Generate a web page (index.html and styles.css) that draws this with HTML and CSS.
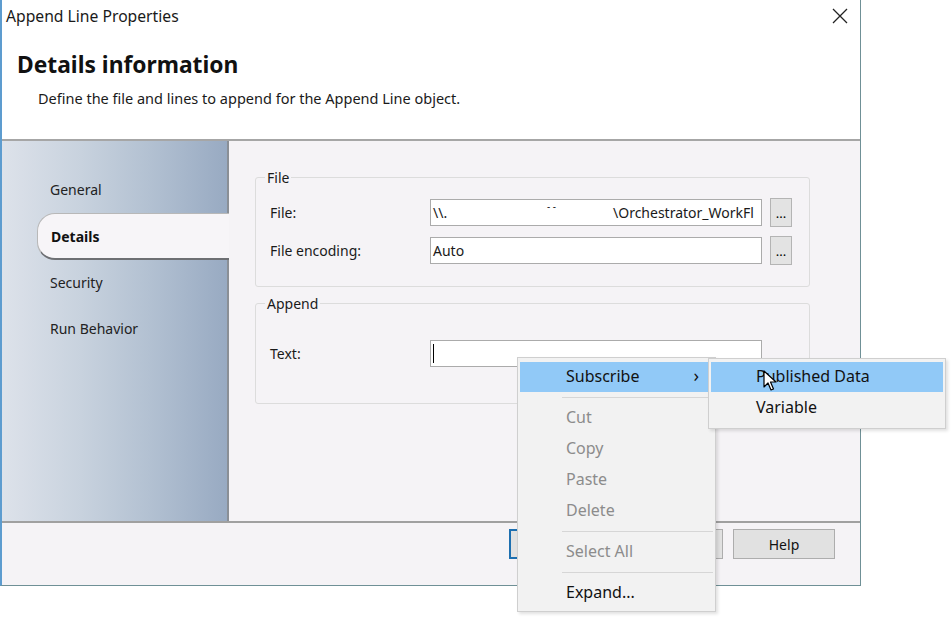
FILE: index.html
```html
<!DOCTYPE html>
<html lang="en">
<head>
<meta charset="UTF-8">
<title>Append Line Properties</title>
<link rel="stylesheet" href="styles.css">
</head>
<body>

<div class="dialog">
  <div class="titlebar">
    <span class="title">Append Line Properties</span>
    <svg class="close-icon" width="16" height="16" viewBox="0 0 16 16">
      <path d="M1 1 L15 15 M15 1 L1 15" stroke="#222" stroke-width="1.3" fill="none"/>
    </svg>
  </div>

  <header class="header">
    <h1>Details information</h1>
    <p>Define the file and lines to append for the Append Line object.</p>
  </header>

  <div class="main">
    <nav class="nav">
      <div class="nav-item">General</div>
      <div class="nav-item active">Details</div>
      <div class="nav-item">Security</div>
      <div class="nav-item">Run Behavior</div>
    </nav>

    <section class="content">
      <fieldset class="group">
        <legend>File</legend>
        <div class="row">
          <label>File:</label>
          <div class="input path"><span class="share">\\.</span><span class="dash">- -</span><span>\Orchestrator_WorkFl</span></div>
          <button class="dots">...</button>
        </div>
        <div class="row">
          <label>File encoding:</label>
          <div class="input">Auto</div>
          <button class="dots">...</button>
        </div>
      </fieldset>

      <fieldset class="group append">
        <legend>Append</legend>
        <div class="row">
          <label>Text:</label>
          <div class="input"><span class="caret"></span></div>
        </div>
      </fieldset>
    </section>
  </div>

  <footer class="footer">
    <button class="btn default">OK</button>
    <button class="btn">Cancel</button>
    <button class="btn">Help</button>
  </footer>
</div>

<div class="menu">
  <div class="menu-item hover">Subscribe <span class="arrow">&#8250;</span></div>
  <div class="menu-sep"></div>
  <div class="menu-item disabled">Cut</div>
  <div class="menu-item disabled">Copy</div>
  <div class="menu-item disabled">Paste</div>
  <div class="menu-item disabled">Delete</div>
  <div class="menu-sep"></div>
  <div class="menu-item disabled">Select All</div>
  <div class="menu-sep"></div>
  <div class="menu-item">Expand...</div>
</div>

<div class="submenu">
  <div class="menu-item hover">Published Data</div>
  <div class="menu-item">Variable</div>
</div>

<svg class="cursor" width="14" height="22" viewBox="0 0 14 22">
  <path d="M1 1 L1 17 L5 13 L8 20 L10.5 19 L7.5 12 L13 12 Z" fill="#fff" stroke="#000" stroke-width="1.2" stroke-linejoin="round"/>
</svg>

</body>
</html>
```

FILE: styles.css
```css
/* Orchestrator style property dialog */
* {
  box-sizing: border-box;
}

body {
  margin: 0;
  background: #fff;
  font-family: "Noto Sans", "Open Sans", sans-serif;
  color: #1a1a1a;
  width: 951px;
  height: 624px;
  overflow: hidden;
  position: relative;
}

.dialog {
  width: 861px;
  height: 586px;
  border-left: 2px solid #5d9ccf;
  border-right: 1px solid #6f9096;
  border-bottom: 1px solid #6f9096;
  display: flex;
  flex-direction: column;
  background: #fff;
}

.titlebar {
  height: 33px;
  flex-shrink: 0;
  display: flex;
  align-items: center;
  justify-content: space-between;
  padding: 0 12px 0 4px;
}

.title {
  font-size: 15.7px;
  margin-top: -2px;
}

.close-icon {
  margin-top: -2px;
}

.header {
  height: 108px;
  flex-shrink: 0;
  padding-left: 15px;
  border-bottom: 2px solid #a6a6a6;
}

.header h1 {
  margin: 16px 0 0 0;
  font-size: 22.8px;
  font-weight: bold;
  color: #111;
}

.header p {
  margin: 8px 0 0 21px;
  font-size: 14.5px;
}

.main {
  display: flex;
  height: 380px;
  flex-shrink: 0;
  background: #f5f3f6;
}

.nav {
  width: 227px;
  flex-shrink: 0;
  border-right: 2px solid #8a8f96;
  background: linear-gradient(90deg, #dde2ea 0%, #c8d2de 35%, #b3c1d2 65%, #98aac2 100%);
  padding-top: 26px;
}

.nav-item {
  height: 46px;
  line-height: 46px;
  padding-left: 48px;
  font-size: 14px;
  color: #222;
}

.nav-item.active {
  margin-left: 35px;
  margin-right: -2px;
  padding-left: 13px;
  background: #f7f5f8;
  border: 1px solid #b8b8b8;
  border-right: none;
  border-bottom: 2px solid #6d6f73;
  border-radius: 18px 0 0 18px;
  font-weight: bold;
  height: 47px;
  line-height: 45px;
  color: #111;
}

.content {
  flex: 1;
  padding: 27px 50px 0 26px;
}

.group {
  border: 1px solid #dcdcdc;
  border-radius: 3px;
  margin: 0;
  padding: 11px 16px 21px 14px;
}

.group legend {
  font-size: 14px;
  padding: 0 2px;
  margin-left: -5px;
}

.group.append {
  margin-top: 7px;
  padding-top: 26px;
  padding-bottom: 35px;
}

.row {
  display: flex;
  align-items: center;
  height: 29px;
  margin-bottom: 9px;
}

.row:last-child {
  margin-bottom: 0;
}

.row label {
  width: 160px;
  flex-shrink: 0;
  font-size: 14px;
}

.input {
  width: 332px;
  height: 27px;
  flex-shrink: 0;
  border: 1px solid #ababab;
  background: #fff;
  font-size: 14px;
  padding: 0 2px;
  display: flex;
  align-items: center;
  white-space: nowrap;
  overflow: hidden;
}

.share {
  width: 114px;
}

.dash {
  width: 66px;
  font-size: 10px;
  line-height: 10px;
  align-self: flex-start;
  margin-top: 1px;
}

.caret {
  display: inline-block;
  width: 1px;
  height: 19px;
  background: #000;
}

.dots {
  width: 22px;
  height: 29px;
  flex-shrink: 0;
  margin-left: 8px;
  border: 1px solid #b4b4b4;
  background: #e3e3e3;
  font-size: 13px;
  padding: 0;
  font-family: inherit;
}

.footer {
  flex: 1;
  border-top: 2px solid #a0a0a0;
  background: #f5f3f6;
  display: flex;
  justify-content: flex-end;
  align-items: flex-start;
  gap: 10px;
  padding: 6px 25px 0 0;
}

.btn {
  width: 102px;
  height: 30px;
  border: 1px solid #adadad;
  background: #e1e1e1;
  font-family: inherit;
  font-size: 14px;
  color: #111;
}

.btn.default {
  border: 2px solid #1d6fb0;
}

/* context menu overlays */
.menu, .submenu {
  position: absolute;
  background: #f2f2f2;
  border: 1px solid #cfcfcf;
  box-shadow: 2px 2px 3px rgba(0,0,0,0.12);
  padding: 4px 2px 3px;
  font-size: 16px;
}

.menu {
  left: 517px;
  top: 357px;
  width: 199px;
}

.submenu {
  left: 708px;
  top: 358px;
  width: 238px;
  padding-top: 3px;
  padding-bottom: 5px;
}

.menu-item {
  height: 31px;
  line-height: 31px;
  padding-left: 46px;
  position: relative;
  color: #111;
}

.submenu .menu-item {
  padding-left: 45px;
}

.menu-item.hover {
  background: #91c9f7;
  height: 30px;
  line-height: 29px;
}

.menu-item.disabled {
  color: #8c8c8c;
}

.arrow {
  position: absolute;
  right: 14px;
  top: -1px;
  font-size: 18px;
}

.menu-sep {
  height: 1px;
  background: #d6d6d6;
  margin: 5px 0 4px 42px;
}

.cursor {
  position: absolute;
  left: 763px;
  top: 370px;
}
```
